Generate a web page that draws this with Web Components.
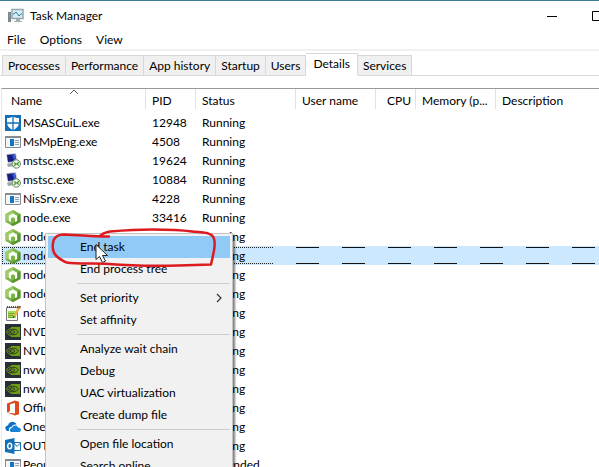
<!DOCTYPE html>
<html lang="en">
<head>
<meta charset="utf-8">
<title>Task Manager</title>
<style>
  html, body {
    height: 100%;
    margin: 0;
    overflow: hidden;
  }

  body {
    font: 12px/16px Lato, "Noto Sans", sans-serif;
    color: #000;
    background: #fff;
  }
</style>
</head>
<body>

<tm-window>
  <tm-title-bar slot="chrome">Task Manager</tm-title-bar>
  <tm-menu-bar slot="chrome" items="File,Options,View"></tm-menu-bar>
  <tm-tabs slot="chrome" items="Processes,Performance,App history,Startup,Users,Details,Services" selected="Details"></tm-tabs>
  <tm-process-list></tm-process-list>
  <tm-context-menu slot="overlay"></tm-context-menu>
  <tm-marker slot="overlay"></tm-marker>
</tm-window>

<script>
const ICONS = {
  shield: `<path fill="#1270b8" d="M0 0h16v16H0z"/><path fill="#fff" d="M8 1.500c2 1.200 4 1.500 6 1.500v4c0 4-2.500 6.500-6 8-3.500-1.500-6-4-6-8V3c2 0 4-.3 6-1.500z"/><path stroke="#1270b8" stroke-width="1.300" d="M8 1v14M2 8h12"/>`,
  app: `<path fill="#f4f6f7" stroke="#858b90" d="M.5 2.500h15v11H.5z"/><path fill="#858b90" d="M0 2h16v2H0z"/><path fill="#1673bd" d="M5 5h4v7H5z"/><path stroke="#8aa4b8" d="M10 6.500h4M10 8.500h4M10 10.500h4"/>`,
  remote: `<path fill="#c9cdd2" d="M1 1l10-1 2 9-10 2z"/><path fill="#151d85" d="M2 2l8-1 1.500 7L3 9z"/><path fill="#3d5bcb" d="M7 1.500l3-.5 1.500 7-2 .3z"/><path fill="#9da4a9" d="M2 11l5-1 2 3-6 1z"/><circle cx="11.300" cy="11" r="4.200" fill="#edf3e8" stroke="#70856a"/><path fill="none" stroke="#4d9a36" stroke-width="1.300" d="M9 9.500l2 1.500-2 2M14 9l-2 2 2 1.500"/>`,
  node: `<path fill="#7db548" d="M8 0l7.500 4v8L8 16 .5 12V4z"/><path fill="#9ccb68" d="M8 0L.5 4v8L4 10V6l4-2.500z"/><path fill="#5c9630" d="M15.500 4v8L8 16l-3-1.600 7-3.400V6z"/><path fill="#fafff5" d="M8 3.300l4.200 2.400v5.200L10 12V8.300L8 7.200 6 8.300V12l-2.200-1.100V5.700z"/>`,
  notepad: `<path fill="#f8f8f2" stroke="#777" d="M1.500 2.500h11v13h-11z"/><path stroke="#555" stroke-dasharray="1 1" stroke-width="2" d="M2 2h11"/><path fill="#a6dc4c" d="M3 6h8v7H3z"/><path stroke="#6ca23a" d="M3 8.500h6M3 10.500h5M3 12.500h6"/><path stroke="#e4b24b" stroke-width="2.500" d="M14.500 2l-5 9"/><path stroke="#a14b32" stroke-width="2.500" d="M15 1l-1 2"/><path stroke="#333" d="M9 11l-.5 2"/>`,
  nvidia: `<path fill="#273034" d="M0 0h16v16H0z"/><path fill="#6f9e15" d="M6 3h9v10H6z"/><path fill="none" stroke="#6f9e15" d="M6 4.500C4 5 2 6.500 1.500 8 3 10.500 4.500 11.500 6.500 12"/><path fill="none" stroke="#2d3a24" d="M6 5.500c4-1 6 .5 7.500 2.500-2 2.500-5 3.500-7.500 2.500"/><path fill="none" stroke="#6f9e15" d="M6 6.500C5 6.500 4 7.300 3.500 8c.5 1 1.500 1.700 2.500 2"/><path stroke="#2d3a24" d="M6 7c2-.5 3 0 4 1-1 1.500-2.500 2-4 1"/>`,
  office: `<path fill="#dc4a1d" fill-rule="evenodd" d="M2 3.500L10 .5l4 1.200v12.600L10 15.500l-8-3 8 1V3L5 4.200v7L2 12.500z"/>`,
  onedrive: `<path fill="#0f6fc3" d="M1 11c-2-3 1-5 2-4.500C4 2 10 1.500 11.500 5.500c-3-.5-4.500 1-5 2.500C4 8 3.500 10 4 12c-1.500 0-2.500 0-3-1z"/><path fill="#1683d8" d="M6 13c-2-1-1.500-4 1-4 .5-3 5-3.500 6-.5 3 0 4 3.500 1.500 4.500z"/>`,
  outlook: `<path fill="#fff" stroke="#1270b8" d="M8.500 4.500h7v8h-7z"/><path fill="none" stroke="#1270b8" d="M9 5l3 3.500L15.500 5"/><path fill="#1270b8" d="M0 2l9.500-2v16L0 14z"/><ellipse cx="4.700" cy="8" rx="2" ry="2.700" fill="none" stroke="#fff" stroke-width="1.500"/>`
};

const icon = name => `<svg width="16" height="16" viewBox="0 0 16 16" fill="none" aria-hidden="true">${ICONS[name]}</svg>`;

class TmElement extends HTMLElement {
  connectedCallback() {
    if (!this.shadowRoot) {
      this.attachShadow({mode: 'open'}).innerHTML = this.render();
    }
  }
}

class TmWindow extends TmElement {
  render() {
    return `
      <style>
        :host {
          display: flex;
          flex-direction: column;
          position: relative;
          box-sizing: border-box;
          height: 100%;
          border-top: 1px solid #3a7c96;
          overflow: hidden;
        }
        main {
          flex: 1;
          min-height: 0;
          padding: 12px 0 0 1px;
        }
      </style>
      <slot name="chrome"></slot>
      <main><slot></slot></main>
      <slot name="overlay"></slot>
    `;
  }
}

class TmTitleBar extends TmElement {
  render() {
    return `
      <style>
        :host { display: block; }
        header {
          display: flex;
          align-items: center;
          gap: 6px;
          height: 29px;
          margin-right: -20px;
          padding-left: 8px;
        }
        h1 { flex: 1; margin: 0; font: inherit; }
        .buttons { display: flex; }
        button {
          display: grid;
          place-items: center;
          width: 45px;
          height: 29px;
          padding: 0;
          border: 0;
          background: none;
        }
      </style>
      <header>
        <svg width="16" height="16" viewBox="0 0 16 16" fill="none" aria-hidden="true">
          <path fill="#7d888c" d="M0 4h3v10H0z"/><path fill="#5bb65c" d="M1 5h1v4H1z"/>
          <path fill="#d3f0f8" stroke="#9aa5aa" stroke-width="1.500" d="M4 1.500h11v9H4z"/>
          <path stroke="#28809e" d="M5 6h1l2-2 3 4 2-2h1"/>
          <path fill="#a4adb1" d="M8 11h4v2h2v1H6v-1h2z"/>
        </svg>
        <h1><slot></slot></h1>
        <div class="buttons">
          <button aria-label="Minimize"><svg width="10" height="10"><path fill="#000" d="M0 5h10v1H0z"/></svg></button>
          <button aria-label="Maximize"><svg width="10" height="10"><path fill="none" stroke="#000" d="M.5.5h9v9h-9z"/></svg></button>
        </div>
      </header>
    `;
  }
}

class TmMenuBar extends TmElement {
  render() {
    const items = this.getAttribute('items').split(',');
    return `
      <style>
        :host { display: block; border-bottom: 2px solid #f1f1f1; }
        nav { display: flex; gap: 14px; height: 19px; padding-left: 7px; }
        button {
          padding: 0;
          border: 0;
          background: none;
          font: inherit;
          color: inherit;
          line-height: 20px;
        }
      </style>
      <nav>${items.map(item => `<button>${item}</button>`).join('')}</nav>
    `;
  }
}

class TmTabs extends TmElement {
  render() {
    const selected = this.getAttribute('selected');
    const items = this.getAttribute('items').split(',');
    return `
      <style>
        :host { display: block; padding: 2px 0 0 2px; border-bottom: 1px solid #d9d9d9; }
        [role=tablist] { display: flex; align-items: flex-end; margin-bottom: -1px; }
        button {
          box-sizing: border-box;
          height: 21px;
          padding: 0 5px;
          border: 1px solid #d9d9d9;
          border-left-width: 0;
          background: #f0f0f0;
          font: inherit;
          color: inherit;
        }
        button:first-child { border-left-width: 1px; }
        [aria-selected=true] {
          height: 23px;
          padding: 0 7px 2px;
          border-bottom-color: #fff;
          background: #fff;
        }
      </style>
      <div role="tablist">
        ${items.map(item => `<button role="tab" aria-selected="${item === selected}">${item}</button>`).join('')}
      </div>
    `;
  }
}

class TmProcessList extends TmElement {
  static rows = [
    ['shield', 'MSASCuiL.exe', '12948'],
    ['app', 'MsMpEng.exe', '4508'],
    ['remote', 'mstsc.exe', '19624'],
    ['remote', 'mstsc.exe', '10884'],
    ['app', 'NisSrv.exe', '4228'],
    ['node', 'node.exe', '33416'],
    ['node', 'node.exe', '36880'],
    ['node', 'node.exe', ''],
    ['node', 'node.exe', ''],
    ['node', 'node.exe', ''],
    ['notepad', 'notepad++.exe', ''],
    ['nvidia', 'NVDisplay.exe', ''],
    ['nvidia', 'NVDisplay.exe', ''],
    ['nvidia', 'nvwmi64.exe', ''],
    ['nvidia', 'nvwmi64.exe', ''],
    ['office', 'OfficeHub.exe', ''],
    ['onedrive', 'OneDrive.exe', ''],
    ['outlook', 'OUTLOOK.EXE', ''],
    ['app', 'PeopleApp.exe', '', 'Suspended']
  ];

  static selectedIndex = 7;

  row([image, name, pid, status = 'Running'], index) {
    const selected = index === TmProcessList.selectedIndex;
    return `
      <tr${selected ? ' class="selected" aria-selected="true"' : ''}>
        <td><span class="name">${icon(image)}${name}</span></td>
        <td>${pid}</td>
        <td>${status}</td>
        <td></td><td></td><td></td><td></td>
      </tr>
    `;
  }

  render() {
    return `
      <style>
        :host { display: block; border-top: 1px solid #999; border-left: 1px solid #e8e8e8; }
        table { width: 100%; table-layout: fixed; border-collapse: separate; border-spacing: 0; }
        th, td {
          box-sizing: border-box;
          padding: 0 0 0 6px;
          font-weight: normal;
          text-align: left;
          white-space: nowrap;
        }
        th { position: relative; height: 24px; padding-bottom: 1px; }
        th::after {
          content: "";
          position: absolute;
          top: 0;
          right: 0;
          width: 1px;
          height: 20px;
          background: #e2e2e2;
        }
        th:last-child::after { display: none; }
        th:first-child { padding-left: 9px; }
        th.number { padding: 0 5px 1px 0; text-align: right; }
        th svg { position: absolute; top: 0; left: 67px; }
        td { height: 19px; line-height: 18px; }
        td:first-child { padding-left: 3px; }
        .name { display: flex; align-items: center; gap: 2px; height: 19px; overflow: hidden; }
        .name svg { flex: none; }

        /* focus rectangle: dots over the first columns, then long dashes */
        .selected {
          background:
            repeating-linear-gradient(90deg, #222 0 1px, transparent 1px 2px) 0 1px / 271px 1px no-repeat,
            repeating-linear-gradient(90deg, #222 0 1px, transparent 1px 2px) 0 17px / 271px 1px no-repeat,
            repeating-linear-gradient(180deg, #222 0 1px, transparent 1px 2px) 0 1px / 1px 17px no-repeat,
            linear-gradient(#cce8ff, #cce8ff) 0 0 / 294px 19px no-repeat,
            repeating-linear-gradient(90deg, transparent 0 18px, #111 18px 41px, transparent 41px 46px) 276px 1px / 100% 1px no-repeat,
            repeating-linear-gradient(90deg, transparent 0 18px, #111 18px 41px, transparent 41px 46px) 276px 17px / 100% 1px no-repeat,
            #cce8ff;
        }
      </style>
      <table>
        <colgroup>
          <col style="width: 144px"><col style="width: 50px"><col style="width: 100px"><col style="width: 80px">
          <col style="width: 40px"><col style="width: 80px"><col>
        </colgroup>
        <thead>
          <tr>
            <th aria-sort="ascending">Name<svg width="10" height="6" aria-hidden="true"><path fill="none" stroke="#666" d="M1 5l4-4 4 4"/></svg></th>
            <th>PID</th><th>Status</th><th>User name</th><th class="number">CPU</th><th>Memory (p...</th><th>Description</th>
          </tr>
        </thead>
        <tbody>${TmProcessList.rows.map(this.row).join('')}</tbody>
      </table>
    `;
  }
}

class TmContextMenu extends TmElement {
  static groups = [
    ['End task', 'End process tree'],
    ['Set priority', 'Set affinity'],
    ['Analyze wait chain', 'Debug', 'UAC virtualization', 'Create dump file'],
    ['Open file location', 'Search online']
  ];

  item(label) {
    const arrow = label === 'Set priority'
      ? '<svg width="6" height="10" aria-hidden="true"><path fill="none" stroke="#333" stroke-width="1.200" d="M1 1l4 4-4 4"/></svg>'
      : '';
    return `<button role="menuitem"${label === 'End task' ? ' class="active"' : ''}>${label}${arrow}</button>`;
  }

  render() {
    return `
      <style>
        :host {
          position: absolute;
          top: 232px;
          left: 45px;
          box-sizing: border-box;
          width: 188px;
          padding: 2px;
          border: 1px solid #c4c4c4;
          background: #f1f1f1;
          box-shadow: 2px 2px 2px rgba(0, 0, 0, .5);
        }
        [role=menu] { display: flex; flex-direction: column; }
        button {
          display: flex;
          align-items: center;
          justify-content: space-between;
          height: 22px;
          padding: 0 8px 0 32px;
          border: 0;
          background: none;
          font: inherit;
          color: inherit;
        }
        .active { background: #91c9f7; }
        hr {
          width: 153px;
          height: 1px;
          margin: 3px 0 3px auto;
          border: 0;
          background: #ccc;
        }
      </style>
      <div role="menu">
        ${TmContextMenu.groups.map(group => group.map(this.item).join('')).join('<hr>')}
      </div>
    `;
  }
}

/* hand-drawn ring round the active command, and the mouse pointer */
class TmMarker extends TmElement {
  render() {
    return `
      <style>
        :host { position: absolute; top: 221px; left: 40px; pointer-events: none; }
        svg { display: block; }
      </style>
      <svg width="200" height="60" viewBox="0 0 200 60" fill="none" aria-hidden="true">
        <path fill="#fff" stroke="#222" d="M56 22.500v15l3.500-3 3 6 3-1.500-3-5.500h5z"/>
        <path stroke="#dc1a20" stroke-width="2.500" stroke-linecap="round" stroke-linejoin="round" d="M69 14.500C58 15 40 13 24 12.500c-6 0-9 2-10.500 6-1 4-1.500 9 1 13 3 5 6 6 12 9 12 2 28 .5 42 1.500 26 2 50 2 70 1.500L171 42.500c1-4 2-9 3-14 1-6 1.500-12-2-15-4-4-13-3-20-4-14-2-24-2-40-2-18 0-30 1-42 2-5 1-8 2-10 4.500"/>
      </svg>
    `;
  }
}

customElements.define('tm-window', TmWindow);
customElements.define('tm-title-bar', TmTitleBar);
customElements.define('tm-menu-bar', TmMenuBar);
customElements.define('tm-tabs', TmTabs);
customElements.define('tm-process-list', TmProcessList);
customElements.define('tm-context-menu', TmContextMenu);
customElements.define('tm-marker', TmMarker);
</script>
</body>
</html>
